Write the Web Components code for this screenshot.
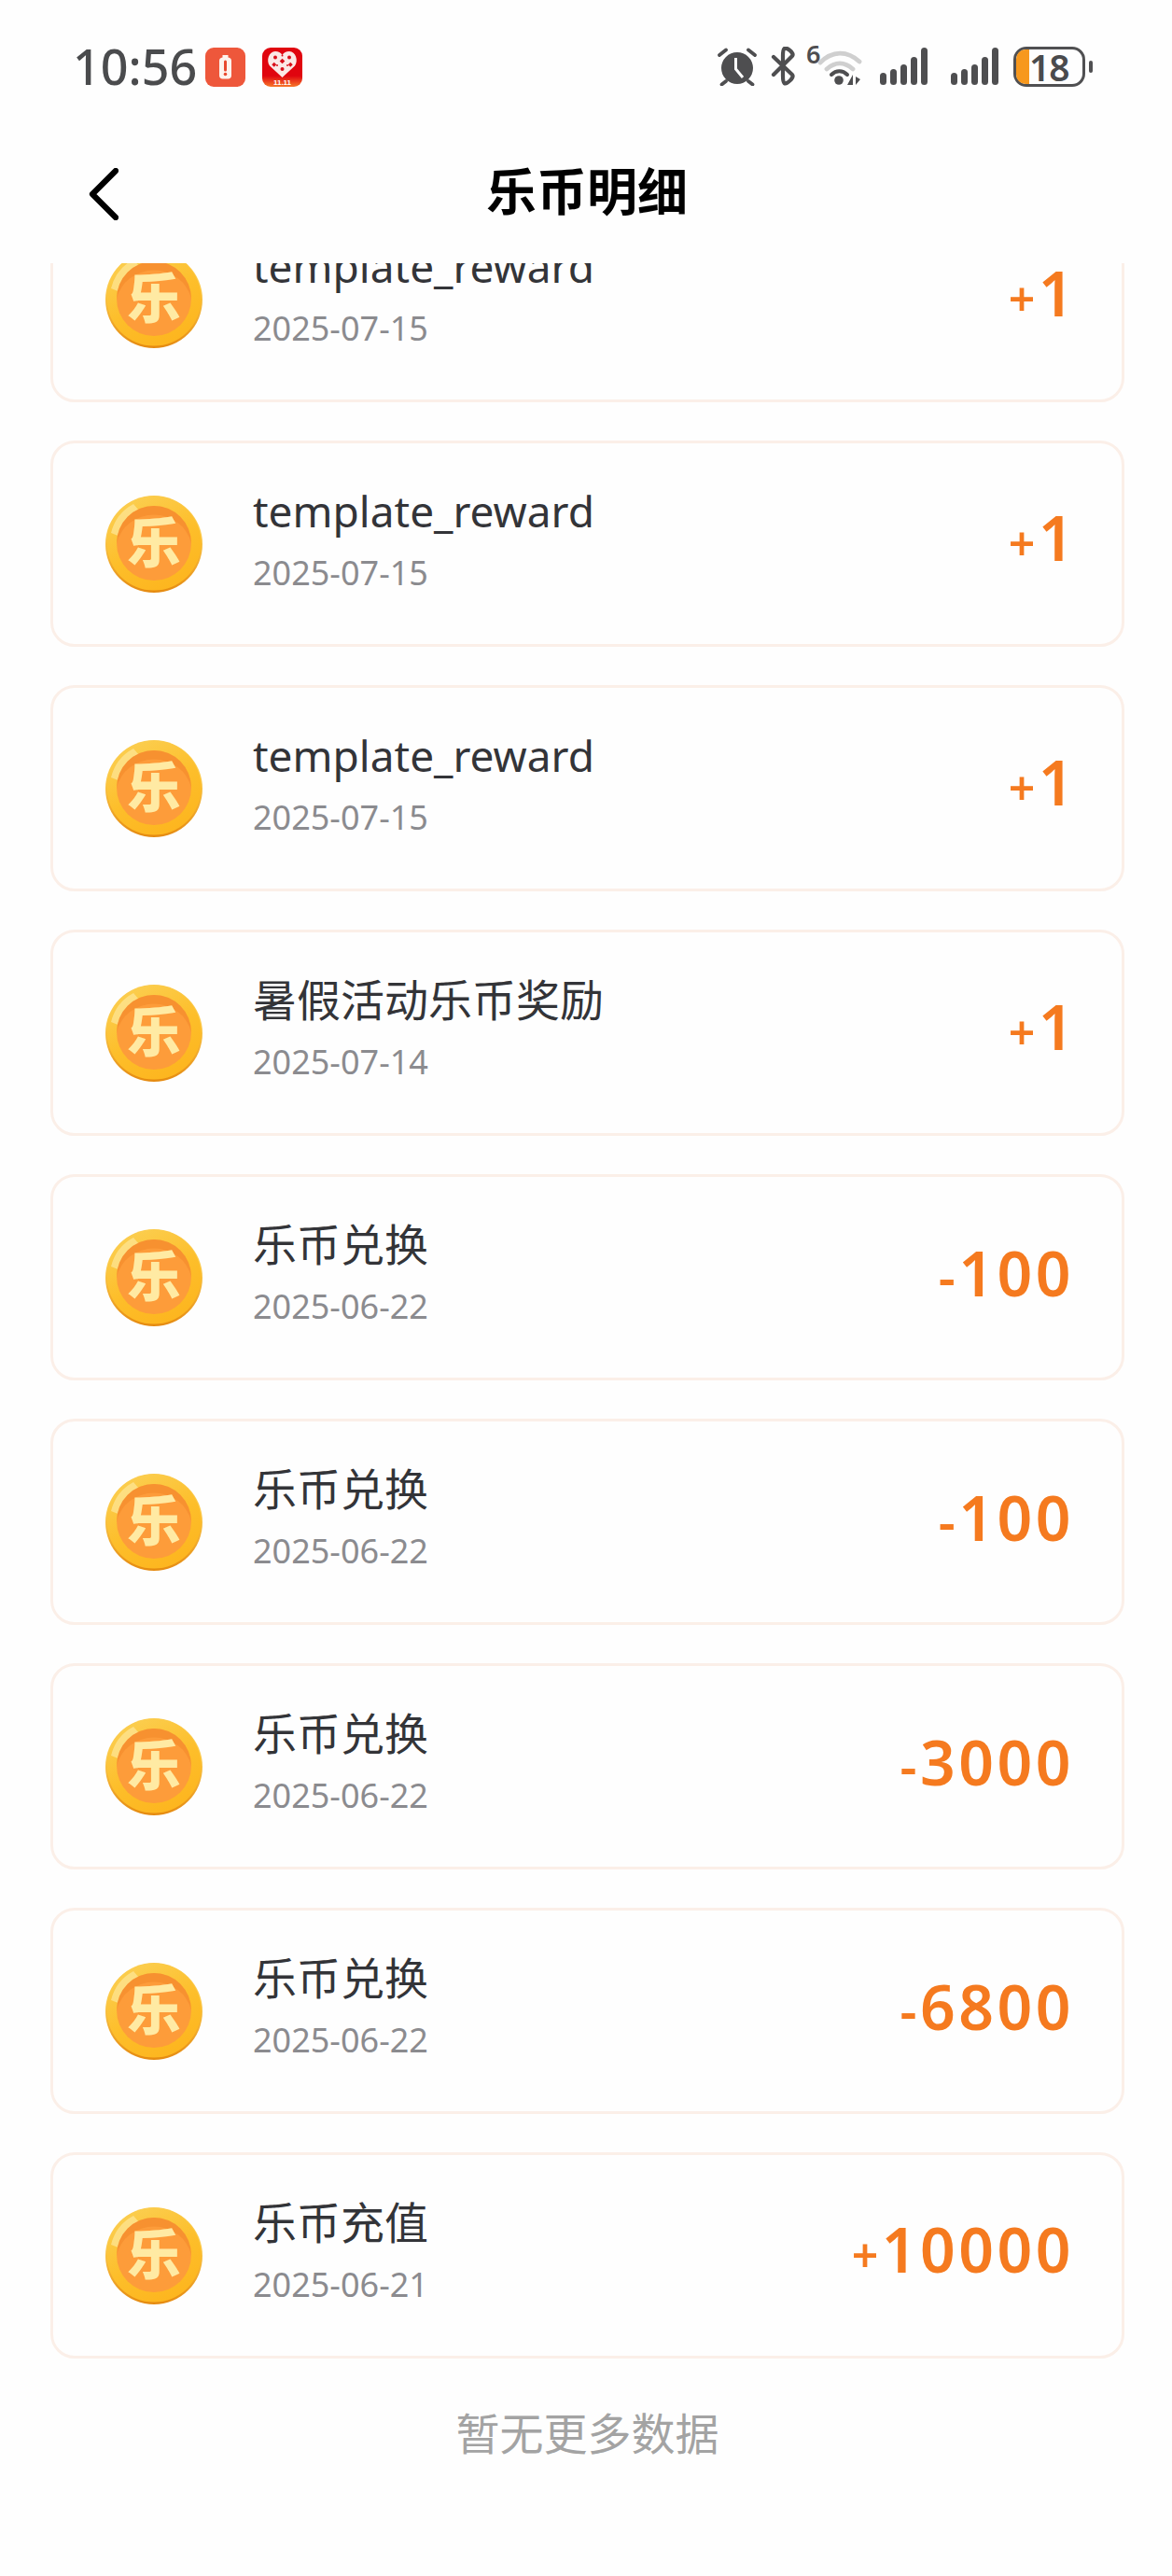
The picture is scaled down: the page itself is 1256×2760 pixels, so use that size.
<!DOCTYPE html>
<html lang="zh"><head><meta charset="utf-8"><title>乐币明细</title>
<style>
html,body{margin:0;padding:0;background:#fefefe;font-family:"Noto Sans","Noto Sans CJK SC",sans-serif}
</style></head><body>
<app-screen>
<status-bar slot="top"></status-bar>
<nav-header slot="top">乐币明细</nav-header>
<ledger-row style="margin-top:-72px" name="template_reward" date="2025-07-15" sign="+" value="1"></ledger-row>
<ledger-row name="template_reward" date="2025-07-15" sign="+" value="1"></ledger-row>
<ledger-row name="template_reward" date="2025-07-15" sign="+" value="1"></ledger-row>
<ledger-row name="暑假活动乐币奖励" date="2025-07-14" sign="+" value="1"></ledger-row>
<ledger-row name="乐币兑换" date="2025-06-22" sign="-" value="100"></ledger-row>
<ledger-row name="乐币兑换" date="2025-06-22" sign="-" value="100"></ledger-row>
<ledger-row name="乐币兑换" date="2025-06-22" sign="-" value="3000"></ledger-row>
<ledger-row name="乐币兑换" date="2025-06-22" sign="-" value="6800"></ledger-row>
<ledger-row name="乐币充值" date="2025-06-21" sign="+" value="10000"></ledger-row>
<end-note>暂无更多数据</end-note>
</app-screen>
<script>
function def(name,html,setup){
  customElements.define(name,class extends HTMLElement{
    connectedCallback(){
      if(this.shadowRoot)return;
      const r=this.attachShadow({mode:'open'});
      r.innerHTML=html;
      if(setup)setup(this,r);
    }
  });
}
const bars=`<rect x="0" y="27" width="7" height="13" rx="3.500"/><rect x="11" y="23" width="7" height="17" rx="3.500"/><rect x="22" y="18" width="7" height="22" rx="3.500"/><rect x="33" y="10" width="7" height="30" rx="3.500"/><rect x="44" y="0" width="7" height="40" rx="3.500"/>`;
def('app-screen',`<style>
:host{display:flex;flex-direction:column;width:1256px;height:2760px;overflow:hidden;background:#fefefe}
.top{flex:none;position:relative;z-index:1;background:#fefefe}
.list{flex:1;min-height:0;overflow:hidden;display:flex;flex-direction:column;gap:41px;padding:0 51px 0 54px}
</style><div class="top"><slot name="top"></slot></div><div class="list"><slot></slot></div>`);

def('status-bar',`<style>
:host{display:flex;align-items:flex-start;height:144px;box-sizing:border-box;padding:49px 85px 0 78px}
.time{font:500 52px/44px "Noto Sans",sans-serif;color:#4a4b4d;flex:none;width:142px;white-space:nowrap}
svg{display:block;flex:none}
.l{display:flex;gap:18px;margin-top:2px}
.r{margin-left:auto;display:flex;align-items:flex-start}
.batt{flex:none;display:flex;align-items:center;margin-left:16px;width:77px;height:43px;margin-top:1px;box-sizing:border-box;border:3px solid #505052;border-radius:14px}
.fill{flex:none;width:14px;height:100%;background:#f7981d;border-radius:10px 0 0 10px}
.pct{font:600 39px/37px "Noto Sans",sans-serif;color:#4a4b4d;letter-spacing:-1px}
.nub{flex:none;margin:16px 0 0 4px;width:4px;height:13px;border-radius:2px;background:#505052}
</style>
<span class="time">10:56</span>
<div class="l">
<svg width="43" height="42" viewBox="0 0 43 42"><rect width="43" height="42" rx="9" fill="#ee573b"/><path d="M18.500 8h6v2.500c2.500.6 3.500 1.800 3.500 3.500V30c0 2-1.500 3.500-3.500 3.500h-6C16.500 33.500 15 32 15 30V14c0-1.700 1-2.900 3.500-3.500z" fill="#fdf3ee"/><path d="M21.500 15v9" stroke="#e8492f" stroke-width="3" stroke-linecap="round"/><circle cx="21.500" cy="28.500" r="1.800" fill="#e8492f"/></svg>
<svg width="43" height="42" viewBox="0 0 43 42"><defs><linearGradient id="pd" x1="0" y1="0" x2="0" y2="1"><stop offset=".72" stop-color="#e0050f"/><stop offset="1" stop-color="#f7782a"/></linearGradient></defs><rect width="43" height="42" rx="9" fill="url(#pd)"/><path d="M21.500 32 L8 19.500C4 14 7 4 14 4c3.300 0 6 1.500 7.500 4C23 5.500 25.700 4 29 4c7 0 10 10 6 15.500z" fill="#fbe9e6"/><g fill="#d8101a"><circle cx="14" cy="10.500" r="2"/><circle cx="29" cy="10.500" r="2"/><rect x="19.500" y="12.500" width="4" height="4" transform="rotate(45 21.500 14.500)"/><rect x="11" y="16.500" width="3.500" height="3.500" transform="rotate(45 12.750 18.250)"/><rect x="28.500" y="16.500" width="3.500" height="3.500" transform="rotate(45 30.250 18.250)"/><circle cx="21.500" cy="23" r="2"/><circle cx="21.500" cy="8.500" r="1"/><circle cx="16" cy="19" r="1"/><circle cx="27" cy="19" r="1"/></g><text x="21.500" y="40" text-anchor="middle" font-family="Liberation Sans,sans-serif" font-size="8" font-weight="700" fill="#fff">11.11</text></svg>
</div>
<div class="r">
<svg width="44" height="42" viewBox="0 0 44 42" fill="none" style="margin-top:1px"><circle cx="22" cy="23" r="17" fill="#4e4e50"/><path d="M20.500 12v12l7.500 9" stroke="#fff" stroke-width="3"/><path d="M3 9l7-5.500M41 9l-7-5.500M10 37l-4.500 3.500M34 37l4.500 3.500" stroke="#4e4e50" stroke-width="3.800" stroke-linecap="round"/></svg>
<svg width="27" height="42" viewBox="0 0 27 42" fill="none" style="margin:1px 0 0 14px"><path d="M3 11 23 30c2.500 3-6 11-8.500 9-1.200-1-1.500-4-1.500-8V10c0-4 .3-7 1.500-8C17 0 25.500 7 23 10L3 30" stroke="#4e4e50" stroke-width="4.200" stroke-linecap="round" stroke-linejoin="round"/></svg>
<svg width="60" height="60" viewBox="0 -16 60 60" fill="none" style="margin:-17px 0 0 11px"><text x="0" y="20" font-family="Noto Sans,sans-serif" font-size="27" font-weight="600" fill="#4e4e50">6</text><path d="M15 19C28 6 44 6 57 18M22 26c9-8 19-8 28 0" stroke="#cfcfcf" stroke-width="4.800" stroke-linecap="round"/><path d="M27 32c5-5 12-5 17 0" stroke="#4e4e50" stroke-width="4" stroke-linecap="round"/><circle cx="35" cy="38" r="4.800" fill="#4e4e50"/><path d="M50 32v11h-6zM53 34v9l5-6z" fill="#4e4e50"/></svg>
<svg width="51" height="41" viewBox="0 0 51 41" style="margin:2px 0 0 19px" fill="#4e4e50">${bars}</svg>
<svg width="51" height="41" viewBox="0 0 51 41" style="margin:2px 0 0 25px" fill="#4e4e50">${bars}</svg>
<div class="batt"><div class="fill"></div><div class="pct">18</div></div><div class="nub"></div>
</div>`);

def('nav-header',`<style>
:host{display:flex;align-items:center;justify-content:center;position:relative;height:138px;box-sizing:border-box;padding-bottom:20px;padding-left:2px;font:700 54px/60px "Noto Sans CJK SC",sans-serif;color:#000}
svg{position:absolute;left:95px;top:36px}
</style><svg width="32" height="56" viewBox="0 0 32 56" fill="none"><path d="M29 3 4 28 29 53" stroke="#000" stroke-width="6.200" stroke-linecap="round" stroke-linejoin="round"/></svg><slot></slot>`);

def('coin-icon',`<style>
:host{display:block;flex:none;width:104px;height:104px}
svg{display:block}
text{font-family:"Noto Sans CJK SC",sans-serif;font-weight:900;font-size:58px;fill:#ffeaa3}
</style><svg width="104" height="104" viewBox="0 0 104 104"><defs>
<linearGradient id="o" x1=".2" y1="0" x2=".7" y2="1"><stop offset="0" stop-color="#fbcf52"/><stop offset=".55" stop-color="#fdbe2a"/><stop offset="1" stop-color="#fdb51e"/></linearGradient>
<linearGradient id="e" x1="0" y1="0" x2="0" y2="1"><stop offset=".4" stop-color="#fbc94a"/><stop offset="1" stop-color="#e58a10"/></linearGradient>
</defs><circle cx="52" cy="52" r="52" fill="url(#e)"/><circle cx="52" cy="51" r="50.500" fill="url(#o)"/><path d="M6 40A48 48 0 0 1 30 9L36 16A42 42 0 0 0 16 44z" fill="#fde79a" opacity=".7"/><circle cx="52" cy="51" r="40" fill="#fd9c3a"/><path d="M12 51a40 40 0 0 1 80 0 41 39 0 0 0-80 0z" fill="#f18526" opacity=".5"/><text x="52" y="72" text-anchor="middle">乐</text></svg>`);

def('ledger-row',`<style>
:host{display:flex;flex:none;align-items:center;box-sizing:border-box;width:1151px;height:221px;padding:0 51px 0 56px;background:#fefefe;border:3px solid #fbefe8;border-radius:26px}
.t{flex:1;min-width:0;margin-left:54px;display:flex;flex-direction:column}
.n{font:400 46px/60px "Noto Sans","Noto Sans CJK SC",sans-serif;color:#333438;margin-top:-12px}
.n.cjk{font-size:47px}
.d{font:400 36px/44px "Noto Sans",sans-serif;color:#8b8b8f;margin-top:15px}
.a{font:600 66px/80px "Noto Sans",sans-serif;color:#f57a1f;letter-spacing:3.500px;margin-top:-8px;white-space:nowrap;display:flex;align-items:baseline}
.a.one{margin-right:-3px}
.s.minus{font-size:56px}
.s.plus{font-size:50px}
</style><coin-icon></coin-icon><div class="t"><div class="n"></div><div class="d"></div></div><div class="a"><span class="s"></span><span class="v"></span></div>`,(h,r)=>{
 const sign=h.getAttribute('sign'),name=h.getAttribute('name'),value=h.getAttribute('value');
 const n=r.querySelector('.n');
 n.textContent=name; if(/[^\x00-\x7f]/.test(name))n.classList.add('cjk');
 r.querySelector('.d').textContent=h.getAttribute('date');
 const s=r.querySelector('.s');
 s.textContent=sign; s.classList.add(sign==='+'?'plus':'minus');
 r.querySelector('.v').textContent=value;
 if(value==='1')r.querySelector('.a').classList.add('one');
});

def('end-note',`<style>
:host{display:block;flex:none;text-align:center;font:400 47px/60px "Noto Sans CJK SC",sans-serif;color:#a3a3a3;margin-top:7px}
</style><slot></slot>`);
</script>
</body></html>
